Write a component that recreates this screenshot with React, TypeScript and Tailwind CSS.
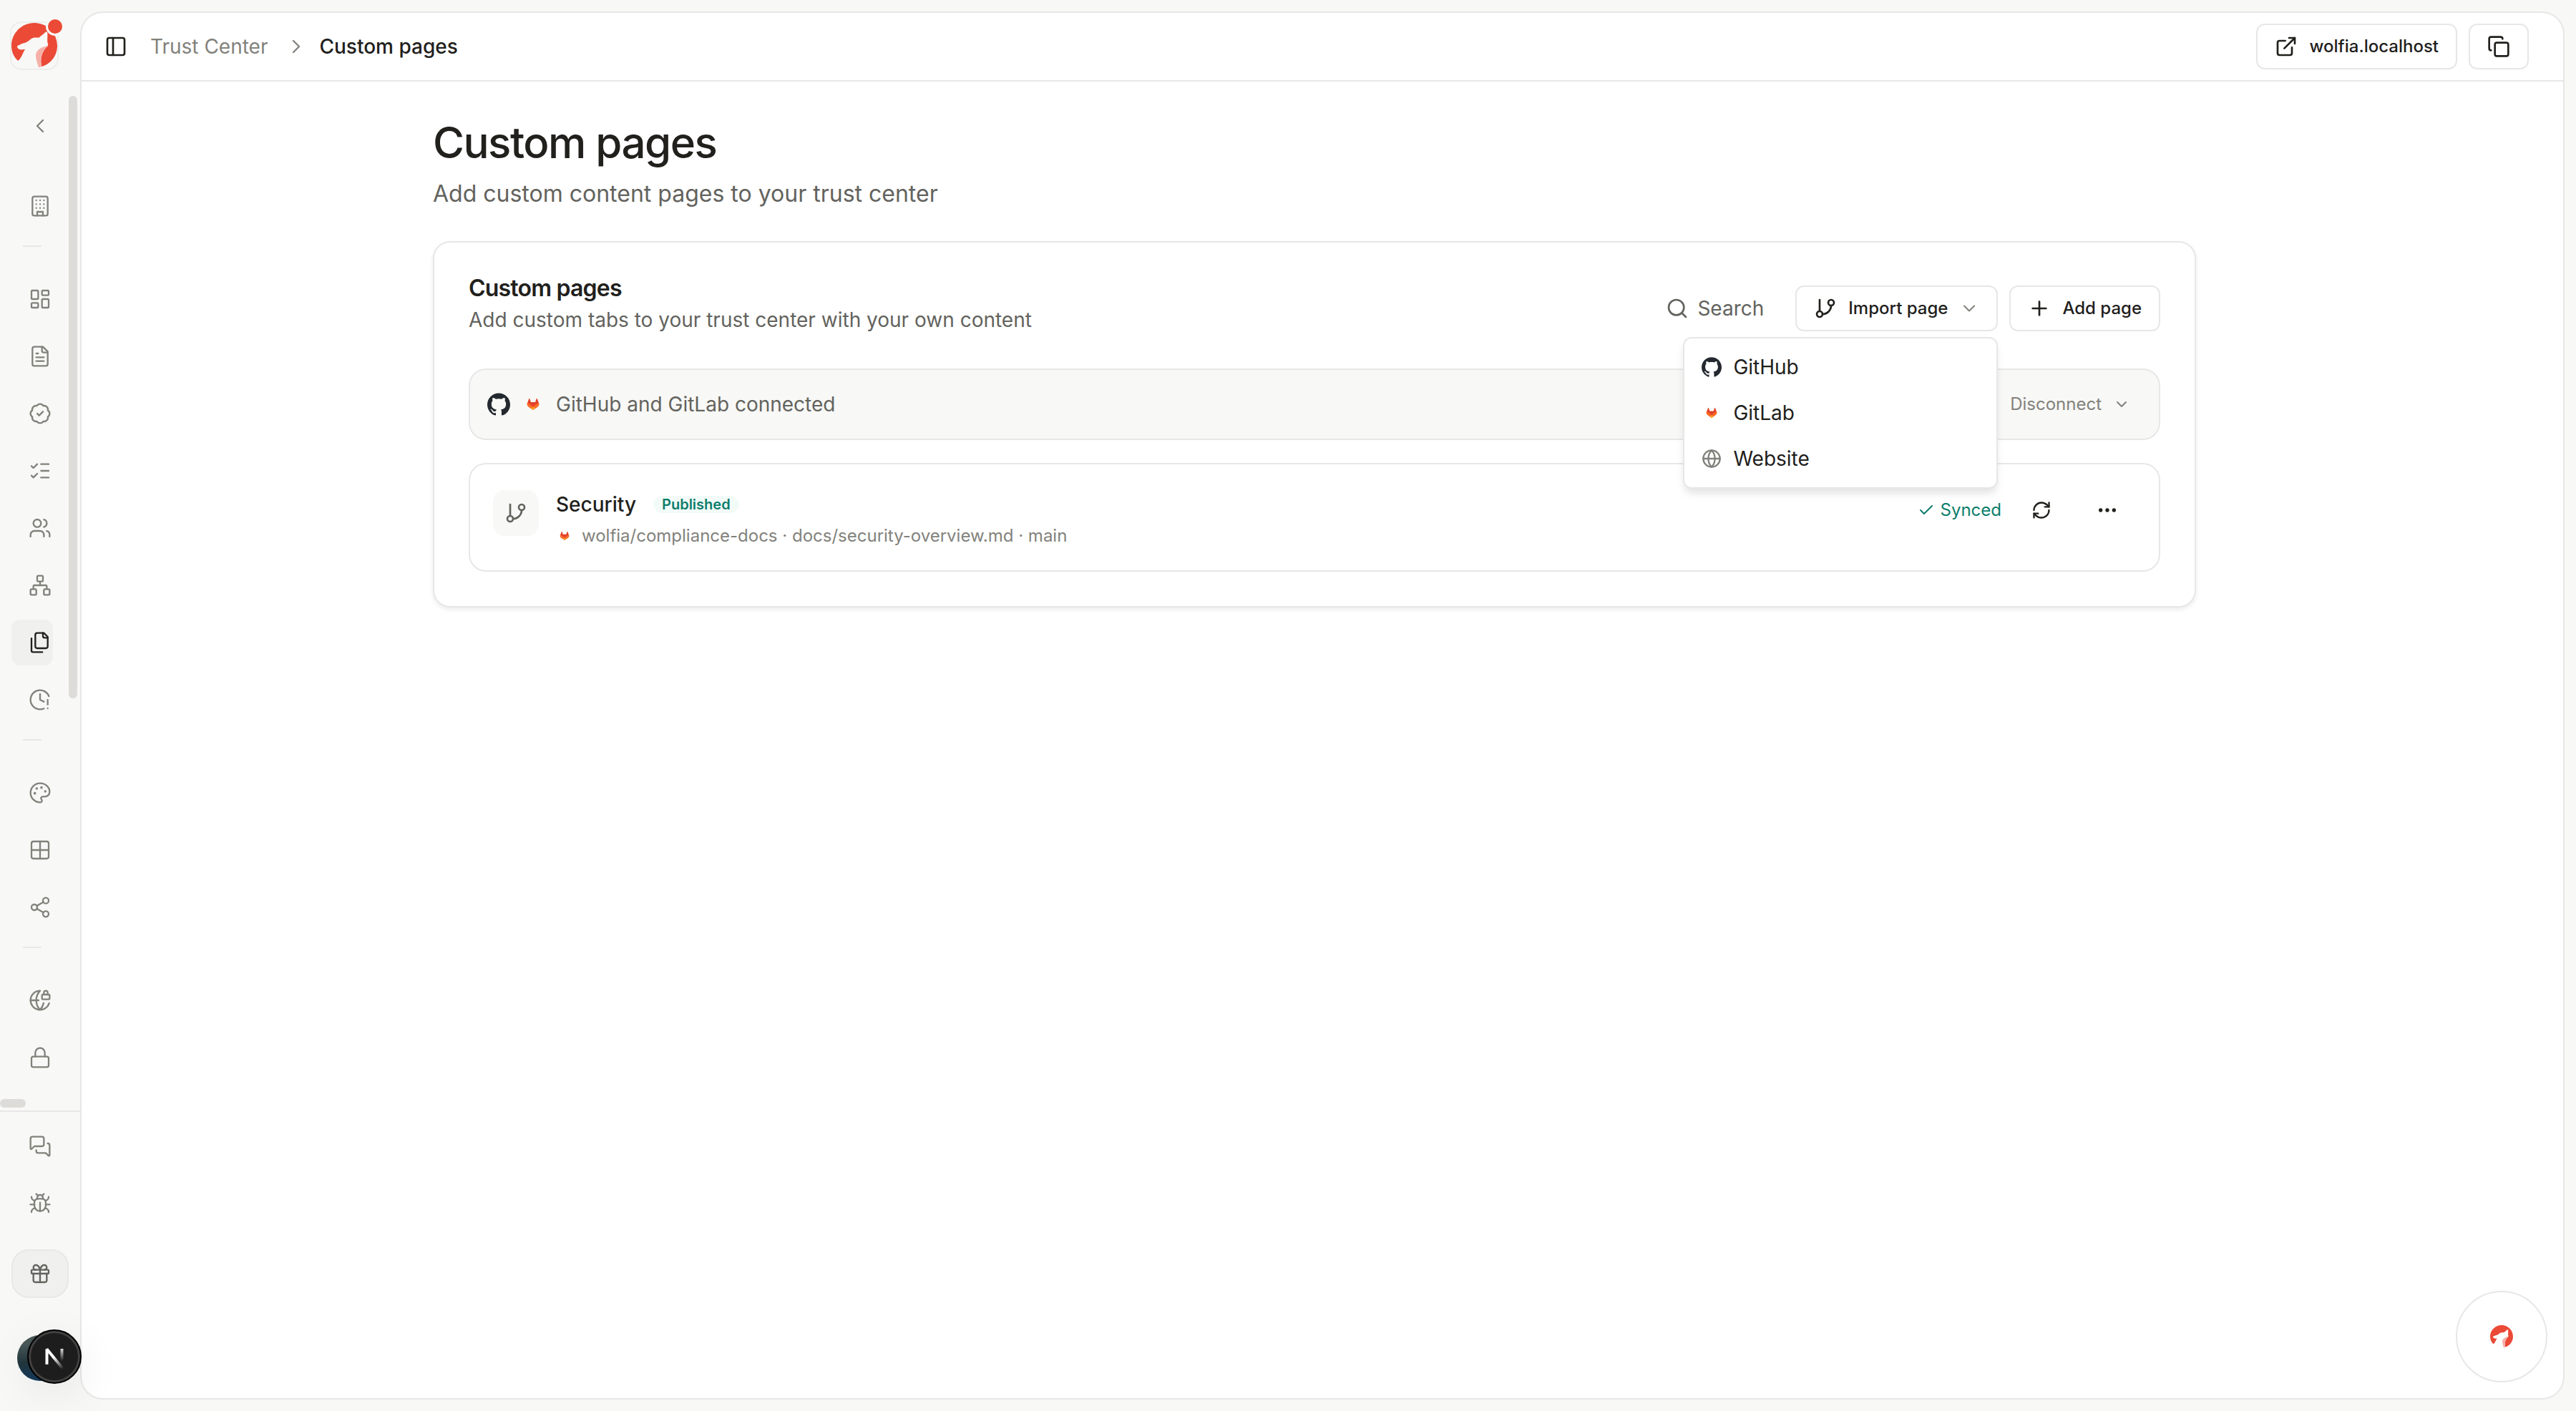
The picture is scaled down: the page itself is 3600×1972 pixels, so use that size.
import React from "react";
import {
  BadgeCheck, Bug, Check, ChevronDown, ChevronLeft, ChevronRight, ClockAlert, Copy, Ellipsis,
  ExternalLink, Gift, GitBranch, Globe, GlobeLock, Grid2x2, LayoutDashboard, ListChecks, Lock,
  MessagesSquare, Network, Palette, PanelLeft, Plus, RefreshCw, Search, Share2, Users,
} from "lucide-react";
import { SiGithub } from "react-icons/si";

type IconProps = { className?: string; strokeWidth?: number };
type Icon = React.ComponentType<IconProps>;

function Stroked({ className, strokeWidth = 2, children }: IconProps & { children: React.ReactNode }) {
  return (
    <svg viewBox="0 0 24 24" fill="none" stroke="currentColor" strokeWidth={strokeWidth} strokeLinecap="round" strokeLinejoin="round" className={className} aria-hidden="true">
      {children}
    </svg>
  );
}

function OfficeBuilding(props: IconProps) {
  return (
    <Stroked {...props}>
      <rect width="16" height="20" x="4" y="2" rx="2" />
      <path d="M9 22v-4h6v4" />
      <path d="M8 6h.01M12 6h.01M16 6h.01M8 10h.01M12 10h.01M16 10h.01M8 14h.01M12 14h.01M16 14h.01" />
    </Stroked>
  );
}

function FileLines(props: IconProps) {
  return (
    <Stroked {...props}>
      <path d="M15 2H6a2 2 0 0 0-2 2v16a2 2 0 0 0 2 2h12a2 2 0 0 0 2-2V7Z" />
      <path d="M14 2v4a2 2 0 0 0 2 2h4" />
      <path d="M10 9H8" />
      <path d="M16 13H8" />
      <path d="M16 17H8" />
    </Stroked>
  );
}

function FileStack(props: IconProps) {
  return (
    <Stroked {...props}>
      <path d="M20 7h-3a2 2 0 0 1-2-2V2" />
      <path d="M9 18a2 2 0 0 1-2-2V4a2 2 0 0 1 2-2h7l4 4v10a2 2 0 0 1-2 2Z" />
      <path d="M3 7.600v12.800A1.600 1.600 0 0 0 4.600 22h9.800" />
    </Stroked>
  );
}

function GitLabMark({ className }: { className?: string }) {
  return (
    <svg viewBox="40 40 300 300" className={className} aria-hidden="true">
      <path fill="#e24329" d="M265.264 174.372l-.213-.558-21.199-55.309c-.424-1.084-1.186-1.996-2.177-2.627-.988-.634-2.147-.933-3.323-.87-1.169.062-2.292.489-3.208 1.218-.91.736-1.566 1.73-1.875 2.853l-14.313 43.807h-57.91l-14.313-43.807c-.309-1.123-.965-2.118-1.875-2.853-.916-.729-2.039-1.156-3.208-1.218-1.175-.063-2.335.236-3.323.87-.992.63-1.753 1.543-2.177 2.627l-21.199 55.312-.213.555c-6.282 16.385-.93 34.908 13.059 45.488l.262.197 32.291 24.174 15.972 12.09 9.72 7.349c2.34 1.773 5.578 1.773 7.92 0l9.719-7.349 15.968-12.09 32.481-24.315.086-.066c13.978-10.58 19.327-29.096 13.048-45.478z" />
      <path fill="#fc6d26" d="M265.264 174.372l-.213-.558c-10.518 2.16-20.204 6.61-28.499 12.816-.134.098-25.205 19.058-46.552 35.197l29.648 22.404 32.481-24.315.086-.066c13.978-10.58 19.327-29.096 13.049-45.478z" />
      <path fill="#fca326" d="M160.35 244.231l15.971 12.09 9.72 7.349c2.34 1.773 5.578 1.773 7.92 0l9.719-7.349 15.968-12.09L190 221.827z" />
      <path fill="#fc6d26" d="M143.446 186.63c-8.292-6.203-17.975-10.655-28.496-12.813l-.213.555c-6.282 16.385-.93 34.908 13.059 45.488l.262.197 32.291 24.174L190 221.827c-21.347-16.139-46.42-35.098-46.554-35.197z" />
    </svg>
  );
}

function WolfMark({ className }: { className?: string }) {
  return (
    <svg viewBox="48 96 192 192" className={className} aria-hidden="true">
      <path
        fill="#eb4a37"
        d="M76 255C58 240 48 217 48 192C48 139 91 96 144 96C197 96 240 139 240 192C240 233 214 268 175 279C167 250 174 215 201 192C199 190 202 186 202 183C196 180 200 160 199 138C197 132 192 133 187 138C176 149 170 151 163 158C152 157 142 156 133 161C124 166 118 174 111 177C100 182 92 182 86 186C80 190 76 189 72 194C72 202 79 207 89 208C95 209 98 206 105 208C95 220 93 240 76 255Z"
      />
      <path fill="#f5b0a8" d="M201 192C172 196 149 212 150 235C151 252 158 268 162 283C168 282 171 281 175 279C167 250 174 215 201 192Z" />
    </svg>
  );
}

function NextMark({ className }: { className?: string }) {
  return (
    <svg viewBox="0 0 72 72" fill="none" className={className} aria-hidden="true">
      <defs>
        <linearGradient id="stem" x1="47" y1="22" x2="47" y2="42" gradientUnits="userSpaceOnUse">
          <stop stopColor="#fff" />
          <stop offset="1" stopColor="#fff" stopOpacity="0" />
        </linearGradient>
        <linearGradient id="slash" x1="36" y1="36" x2="49" y2="52" gradientUnits="userSpaceOnUse">
          <stop stopColor="#fff" />
          <stop offset="1" stopColor="#fff" stopOpacity="0" />
        </linearGradient>
      </defs>
      <path d="M25.500 47V25.500L48 53" stroke="url(#slash)" strokeWidth="4" strokeLinejoin="bevel" />
      <path d="M46.500 25v17" stroke="url(#stem)" strokeWidth="4" />
    </svg>
  );
}

function NavItem({ icon: I, label, active = false }: { icon: Icon; label: string; active?: boolean }) {
  return (
    <a
      href="#"
      aria-label={label}
      aria-current={active ? "page" : undefined}
      className={
        active
          ? "flex h-16 items-center rounded-xl bg-[#f0f0ef] pl-6 text-[#21201c]"
          : "flex h-16 items-center rounded-xl pl-6 text-[#82827c]"
      }
    >
      <I className="size-8 shrink-0" strokeWidth={1.75} />
    </a>
  );
}

function Divider() {
  return <hr className="mx-4 my-[23px] border-t-2 border-[#e9e8e6]" />;
}

const GROUPS: { icon: Icon; label: string; active?: boolean }[][] = [
  [
    { icon: LayoutDashboard, label: "Overview" },
    { icon: FileLines, label: "Documents" },
    { icon: BadgeCheck, label: "Certifications" },
    { icon: ListChecks, label: "Controls" },
    { icon: Users, label: "Contacts" },
    { icon: Network, label: "Subprocessors" },
    { icon: FileStack, label: "Custom pages", active: true },
    { icon: ClockAlert, label: "Updates" },
  ],
  [
    { icon: Palette, label: "Branding" },
    { icon: Grid2x2, label: "Layout" },
    { icon: Share2, label: "Sharing" },
  ],
  [
    { icon: GlobeLock, label: "Domain" },
    { icon: Lock, label: "Access" },
  ],
];

function Sidebar() {
  return (
    <aside className="relative flex w-28 shrink-0 flex-col">
      <div className="h-32 px-3.5 pt-[30px]">
        <a href="#" aria-label="Home" className="relative flex size-[68px] items-center justify-center rounded-2xl border-2 border-[#ededeb]">
          <WolfMark className="size-16" />
          <span className="absolute -top-2 -right-2.5 size-[26px] rounded-full border-[3px] border-[#f8f8f6] bg-[#eb4a37]" />
        </a>
      </div>

      <nav aria-label="Trust center" className="relative grow pt-4">
        <div className="w-[90px] px-4">
          <div className="flex flex-col">
            <button type="button" aria-label="Back" className="flex h-16 items-center pl-6 text-[#82827c]">
              <ChevronLeft className="size-8 shrink-0" strokeWidth={1.75} />
            </button>
            <div className="mt-12">
              <NavItem icon={OfficeBuilding} label="Organization" />
            </div>
          </div>
          {GROUPS.map((group) => (
            <div key={group[0].label}>
              <Divider />
              <div className="flex flex-col gap-4 pt-[18px]">
                {group.map((item) => (
                  <NavItem key={item.label} {...item} />
                ))}
              </div>
            </div>
          ))}
        </div>
        <span className="absolute top-1.5 right-1 h-[842px] w-3 rounded-full bg-[#dddcd8]" />
        <span className="absolute bottom-1 left-0 h-3 w-9 rounded-full bg-[#dddcd8]" />
      </nav>

      <div className="flex flex-col gap-4 border-t-2 border-[#e7e7e6] px-4 pt-4 pb-[42px]">
        <NavItem icon={MessagesSquare} label="Feedback" />
        <NavItem icon={Bug} label="Report a bug" />
        <button type="button" aria-label="Refer a friend" className="mt-4 flex h-[68px] items-center justify-center rounded-3xl border-2 border-[#e9e8e6] bg-[#f0f0ef] text-[#63635e]">
          <Gift className="size-8" strokeWidth={1.75} />
        </button>
        <button type="button" aria-label="Account" className="mx-auto mt-9 size-16 rounded-full bg-linear-to-b from-[#4a5858] from-20% via-[#22373d] via-60% to-[#123a5e]" />
      </div>

      <button
        type="button"
        aria-label="Open developer tools"
        className="absolute bottom-[38px] -right-0.5 z-10 size-19 rounded-full border-2 border-black bg-[#1d1d1d] shadow-[0_16px_64px_rgba(0,0,0,0.08)] ring-[3px] ring-[#414141] ring-inset"
      >
        <NextMark className="size-18" />
      </button>
    </aside>
  );
}

function Header() {
  return (
    <header className="flex h-24 items-center justify-between border-b-2 border-[#e7e7e7] pr-12 pl-8">
      <div className="flex items-center">
        <button type="button" aria-label="Toggle sidebar" className="text-[#21201c]">
          <PanelLeft className="size-8" />
        </button>
        <nav aria-label="Breadcrumb" className="ml-8 flex items-center text-[28px] leading-10">
          <a href="#" className="text-[#82827c]">Trust Center</a>
          <ChevronRight className="mr-4 ml-6 size-8 text-[#82827c]" strokeWidth={1.75} />
          <span className="font-medium text-[#21201c]">Custom pages</span>
        </nav>
      </div>
      <div className="flex gap-4">
        <a href="#" className="flex h-16 items-center gap-4 rounded-xl border-2 border-[#e7e7e7] px-6 text-2xl font-medium text-[#21201c]">
          <ExternalLink className="size-8" />
          wolfia.localhost
        </a>
        <button type="button" aria-label="Copy link" className="flex h-16 w-21 items-center justify-center rounded-xl border-2 border-[#e7e7e7] text-[#21201c]">
          <Copy className="size-8" />
        </button>
      </div>
    </header>
  );
}

function ImportMenu() {
  return (
    <div role="menu" className="absolute top-[72px] right-0 z-10 w-[440px] rounded-xl border-2 border-[#e7e7e7] bg-white p-2 text-[28px] text-[#21201c] shadow-[0_8px_12px_-2px_rgba(0,0,0,0.12)]">
      <button type="button" role="menuitem" className="flex h-16 w-full items-center gap-4 px-4">
        <SiGithub className="size-7 text-[#24292f]" />
        GitHub
      </button>
      <button type="button" role="menuitem" className="flex h-16 w-full items-center gap-4 px-4">
        <GitLabMark className="size-7" />
        GitLab
      </button>
      <button type="button" role="menuitem" className="flex h-16 w-full items-center gap-4 px-4">
        <Globe className="size-7 text-[#82827c]" />
        Website
      </button>
    </div>
  );
}

function PagesCard() {
  return (
    <section className="mt-[42px] rounded-3xl border-2 border-[#e7e7e7] bg-white p-12 shadow-[0_3px_6px_rgba(0,0,0,0.08)]">
      <div className="flex h-22 items-center justify-between">
        <div className="self-start">
          <h2 className="text-[32px] leading-8 font-semibold tracking-tight text-[#21201c]">Custom pages</h2>
          <p className="mt-2 text-[28px] leading-10 text-[#63635e]">Add custom tabs to your trust center with your own content</p>
        </div>
        <div className="flex items-center gap-4">
          <button type="button" className="mr-7 flex h-16 items-center gap-3 text-[28px] text-[#63635e]">
            <Search className="size-8" />
            Search
          </button>
          <div className="relative">
            <button type="button" aria-haspopup="menu" aria-expanded="true" className="flex h-16 items-center rounded-xl border-2 border-[#e7e7e7] px-6 text-2xl font-medium text-[#21201c]">
              <GitBranch className="size-8" />
              <span className="ml-4">Import page</span>
              <ChevronDown className="ml-4 size-7 text-[#82827c]" strokeWidth={1.75} />
            </button>
            <ImportMenu />
          </div>
          <button type="button" className="flex h-16 items-center gap-4 rounded-xl border-2 border-[#e7e7e7] px-6 text-2xl font-medium text-[#21201c]">
            <Plus className="size-8" />
            Add page
          </button>
        </div>
      </div>

      <div className="mt-10 flex h-25 items-center rounded-3xl border-2 border-[#e7e7e7] bg-[#f8f8f6] pr-8 pl-6">
        <SiGithub className="size-8 text-[#24292f]" />
        <GitLabMark className="ml-4 size-8" />
        <p className="ml-4 grow text-[28px] text-[#63635e]">GitHub and GitLab connected</p>
        <button type="button" className="flex items-center gap-4 pr-2 text-2xl text-[#82827c]">
          Disconnect
          <ChevronDown className="size-6" />
        </button>
      </div>

      <article className="mt-8 flex gap-6 rounded-3xl border-2 border-[#e7e7e7] p-8">
        <span className="mt-1 flex size-16 shrink-0 items-center justify-center rounded-2xl bg-[#f8f8f6] text-[#63635e]">
          <GitBranch className="size-8" />
        </span>
        <div className="grow">
          <div className="flex h-12 items-center gap-6">
            <h3 className="text-[28px] font-medium text-[#21201c]">Security</h3>
            <span className="rounded-full bg-[#f3fbf8] px-3 text-xl leading-6 font-semibold text-[#0d7d6c]">Published</span>
          </div>
          <p className="mt-1 flex items-center gap-3 text-2xl leading-8 text-[#82827c]">
            <GitLabMark className="size-6" />
            wolfia/compliance-docs · docs/security-overview.md · main
          </p>
        </div>
        <div className="flex h-16 items-center text-[#21201c]">
          <span className="flex items-center gap-2 text-2xl text-[#0d7d6c]">
            <Check className="size-6" />
            Synced
          </span>
          <button type="button" aria-label="Sync now" className="ml-6 flex size-16 items-center justify-center">
            <RefreshCw className="size-7" />
          </button>
          <button type="button" aria-label="More actions" className="ml-5 flex size-20 items-center justify-center">
            <Ellipsis className="size-8" />
          </button>
        </div>
      </article>
    </section>
  );
}

export default function App() {
  return (
    <div className="flex min-h-screen bg-[#f8f8f6] font-['Inter',sans-serif] antialiased">
      <Sidebar />
      <main className="relative my-4 mr-4 grow rounded-[32px] border-2 border-[#e7e7e7] bg-white">
        <Header />
        <div className="pt-[49px] pr-[70px] pl-12">
          <div className="mx-auto max-w-[2464px]">
            <h1 className="text-[60px] leading-[72px] font-medium tracking-tight text-[#21201c]">Custom pages</h1>
            <p className="mt-3 text-[32px] leading-12 text-[#63635e]">Add custom content pages to your trust center</p>
            <PagesCard />
          </div>
        </div>
        <button type="button" aria-label="Open chat" className="absolute right-[22px] bottom-[22px] flex size-32 items-center justify-center rounded-full border-2 border-[#e7e7e7] bg-white">
          <WolfMark className="size-8" />
        </button>
      </main>
    </div>
  );
}
